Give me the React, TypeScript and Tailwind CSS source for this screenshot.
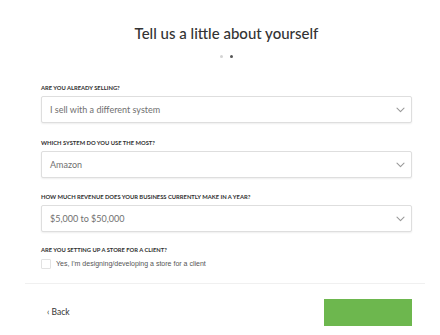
import React from "react";

const Chevron = () => (
  <svg width="9" height="6" viewBox="0 0 9 6" fill="none" className="shrink-0">
    <path d="M1 1.2 L4.5 4.6 L8 1.2" stroke="#9a9a9a" strokeWidth="1.1" strokeLinecap="round" strokeLinejoin="round" />
  </svg>
);

const Label = ({ children, className = "" }: { children: React.ReactNode; className?: string }) => (
  <div
    className={`text-[5.8px] leading-[8px] font-bold uppercase text-[#2f2f2f] ${className}`}
    style={{ fontFamily: "Lato, 'Noto Sans', sans-serif" }}
  >
    {children}
  </div>
);

const Select = ({ value }: { value: string }) => (
  <div className="mt-[4px] h-[27px] flex items-center justify-between border border-[#dedede] rounded-[2px] bg-white pl-[8px] pr-[6px] shadow-[0_1px_2px_rgba(0,0,0,0.07)]">
    <span
      className="text-[9px] text-[#707070]"
      style={{ fontFamily: "Lato, 'Noto Sans', sans-serif" }}
    >
      {value}
    </span>
    <Chevron />
  </div>
);

export default function App() {
  return (
    <div className="w-[440px] h-[335px] bg-white overflow-hidden">
      <div className="pt-[23px] flex flex-col items-center pl-[13px]">
        <h1
          className="text-[15px] leading-[20px] font-medium text-[#333]"
          style={{ fontFamily: "Lato, 'Noto Sans', sans-serif" }}
        >
          Tell us a little about yourself
        </h1>
        <div className="mt-[12px] flex gap-[7px]">
          <span className="w-[3px] h-[3px] rounded-full bg-[#d4d4d4]" />
          <span className="w-[3px] h-[3px] rounded-full bg-[#555]" />
        </div>
      </div>

      <div className="pl-[41px] pr-[28px]">
        <Label className="mt-[26px]">Are you already selling?</Label>
        <Select value="I sell with a different system" />

        <Label className="mt-[16px]">Which system do you use the most?</Label>
        <Select value="Amazon" />

        <Label className="mt-[15px]">How much revenue does your business currently make in a year?</Label>
        <Select value="$5,000 to $50,000" />

        <Label className="mt-[14px]">Are you setting up a store for a client?</Label>
        <div className="mt-[5px] flex items-center h-[10px]">
          <span className="w-[10px] h-[10px] border border-[#e2e2e2] rounded-[1px] bg-white shrink-0" />
          <span
            className="ml-[5px] text-[7px] leading-[10px] text-[#555]"
            style={{ fontFamily: "'Liberation Sans', Arial, sans-serif" }}
          >
            Yes, I'm designing/developing a store for a client
          </span>
        </div>
      </div>

      <div className="mt-[14px] ml-[25px] mr-[15px] h-px bg-[#f0f0f0]" />

      <div className="mt-[15px] pl-[47px] pr-[28px] flex items-center justify-between">
        <span
          className="text-[8.5px] text-[#333]"
          style={{ fontFamily: "Lato, 'Noto Sans', sans-serif" }}
        >
          ‹ Back
        </span>
        <div className="w-[88px] h-[27px] bg-[#6db74e]" />
      </div>
    </div>
  );
}
